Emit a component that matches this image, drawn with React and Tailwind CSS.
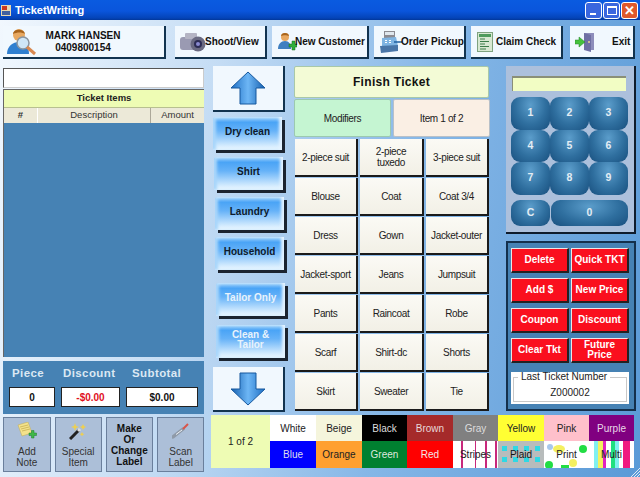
import React from "react";

const toolBtn =
  "flex items-center bg-[#f1f8fe] border-r-2 border-b-2 border-[#12334f] h-[33px] font-bold text-[10px] whitespace-nowrap text-[#111] shrink-0";

const PersonSearch = () => (
  <svg width="30" height="30" viewBox="0 0 30 30">
    <circle cx="13" cy="8" r="6" fill="#e8a860" />
    <path d="M7 7c0-5 11-6 12 0-3-2-8-2-12 0z" fill="#a8641c" />
    <path d="M1 27c0-8 6-12 12-12s10 4 10 12z" fill="#2f7fd0" />
    <circle cx="17" cy="16" r="6" fill="#cfe6f7" stroke="#8a95a0" strokeWidth="1.5" />
    <path d="M21 20l8 7" stroke="#d88850" strokeWidth="3" />
  </svg>
);

const Camera = () => (
  <svg width="26" height="20" viewBox="0 0 26 20">
    <rect x="0" y="5" width="22" height="13" rx="3" fill="#9a9ab2" />
    <rect x="5" y="1" width="12" height="6" rx="1" fill="#b4b4c4" />
    <circle cx="18" cy="12" r="7.5" fill="#6a6a82" />
    <circle cx="18" cy="12" r="4" fill="#2c2c55" />
    <circle cx="18" cy="12" r="2" fill="#8a8ad0" />
  </svg>
);

const PersonAdd = () => (
  <svg width="20" height="20" viewBox="0 0 20 20">
    <circle cx="8" cy="5" r="4" fill="#e8a860" />
    <path d="M4 4c0-4 8-4 8 0-2-1-6-1-8 0z" fill="#a8641c" />
    <path d="M1 17c0-5 3-8 7-8s6 3 6 8z" fill="#3f7fc0" />
    <path d="M12 12h3v-3h3v3h2v3h-2v3h-3v-3h-3z" fill="#2fae3a" stroke="#1a6d22" strokeWidth=".5" />
  </svg>
);

const Register = () => (
  <svg width="24" height="24" viewBox="0 0 24 24">
    <path d="M5 1h11v8H5z" fill="#8b8b92" />
    <path d="M6 2h9v3H6z" fill="#dfe7ee" />
    <path d="M3 8l14-1 2 9-16 2z" fill="#7fb4e2" />
    <path d="M6 10h2v1H6zM10 10h2v1h-2zM6 12h2v1H6zM10 12h2v1h-2z" fill="#fff" />
    <path d="M1 16l18-1v6L2 23z" fill="#4a76a8" />
    <path d="M15 12h8" stroke="#1f5f9f" strokeWidth="1.5" />
  </svg>
);

const ClaimDoc = () => (
  <svg width="16" height="20" viewBox="0 0 16 20">
    <rect x=".5" y=".5" width="15" height="19" fill="#d8e8d2" stroke="#7fa27f" />
    <rect x="2" y="2" width="12" height="3" fill="#4e9b5c" />
    <path d="M3 7h5M3 9.5h9M3 12h5M3 14.5h9M3 17h6" stroke="#3c7d4a" strokeWidth="1" />
  </svg>
);

const ExitDoor = () => (
  <svg width="20" height="20" viewBox="0 0 20 20">
    <path d="M9 1h10v17H9z" fill="#8d8dbb" />
    <path d="M9 1l7 2v17l-7-2z" fill="#6f6fa4" />
    <circle cx="14" cy="10" r="1" fill="#e8d090" />
    <path d="M0 8h4V5l6 5-6 5v-3H0z" fill="#45c23c" stroke="#25802a" strokeWidth=".5" />
  </svg>
);

const ArrowBig = ({ down }) => (
  <svg width="36" height="34" viewBox="0 0 36 34" className={down ? "rotate-180" : ""}>
    <defs>
      <linearGradient id={down ? "ad" : "au"} x1="0" x2="1" y1="0" y2="0">
        <stop offset="0" stopColor="#1f6fc4" />
        <stop offset=".5" stopColor="#6db6f5" />
        <stop offset="1" stopColor="#1560b0" />
      </linearGradient>
    </defs>
    <path d="M18 1L35 17H26V33H10V17H1z" fill={`url(#${down ? "ad" : "au"})`} stroke="#17589e" />
  </svg>
);

const NoteIcon = () => (
  <svg width="20" height="18" viewBox="0 0 20 18">
    <path d="M1 3l10-3 4 11-10 3z" fill="#f4e28c" stroke="#c0a850" strokeWidth=".5" />
    <path d="M3 5l8-2M4 7l8-2M5 9l8-2" stroke="#b8a040" strokeWidth=".6" />
    <path d="M12 11h2.5V8.500h2.500V11h2.500v2.500H17V16h-2.500v-2.500H12z" fill="#40b848" stroke="#1f7d2a" strokeWidth=".5" />
  </svg>
);

const WandIcon = () => (
  <svg width="18" height="18" viewBox="0 0 18 18">
    <path d="M1 17L10 8" stroke="#222" strokeWidth="3" />
    <path d="M9 9l2-2" stroke="#ddd" strokeWidth="3" />
    <path d="M6 1l1 3 3 1-3 1-1 3-1-3-3-1 3-1zM14 2l1 2 2 1-2 1-1 2-1-2-2-1 2-1zM13 10l.8 1.500 1.500.8-1.500.8-.8 1.400-.8-1.400-1.500-.8 1.500-.8z" fill="#eecf50" />
  </svg>
);

const ScanIcon = () => (
  <svg width="18" height="16" viewBox="0 0 18 16">
    <path d="M1 14L11 6" stroke="#8f9aa8" strokeWidth="3.500" strokeLinecap="round" />
    <path d="M4 11.500L10 7" stroke="#eef2f6" strokeWidth="1" />
    <path d="M11 6l5-5" stroke="#d8554a" strokeWidth="2" />
  </svg>
);

const Category = ({ label, light, offset, children }) => (
  <div
    className={`${offset} w-[69px] h-[33px] flex items-center justify-center text-center leading-[10px] pb-[4px] rounded-tl-[3px] shadow-[3px_3px_0_#1b2430,inset_-3px_0_3px_#e4f3ff,inset_3px_0_3px_#a8d6fb] bg-[linear-gradient(180deg,#a6d4fb_0%,#4aa4f6_16%,#66b2f8_42%,#cfe9fe_85%,#f0f9ff_100%)] font-bold text-[10px] ${light ? "text-[#e8f3fc]" : "text-[#0e1a2b]"}`}
  >
    {children || label}
  </div>
);

const garments = [
  "2-piece suit", "2-piece tuxedo", "3-piece suit",
  "Blouse", "Coat", "Coat 3/4",
  "Dress", "Gown", "Jacket-outer",
  "Jacket-sport", "Jeans", "Jumpsuit",
  "Pants", "Raincoat", "Robe",
  "Scarf", "Shirt-dc", "Shorts",
  "Skirt", "Sweater", "Tie",
];

const reds = ["Delete", "Quick TKT", "Add $", "New Price", "Coupon", "Discount", "Clear Tkt", "Future Price"];

const KEY =
  "flex items-center justify-center rounded-[9px] bg-[radial-gradient(ellipse_at_50%_25%,#5b9dcb_0%,#2f6f9f_55%,#184f7e_100%)] text-[#e4edf4] font-bold text-[10.5px]";

const Swatch = ({ bg, text, children, label }) => (
  <div className={`relative flex items-center justify-center overflow-hidden text-[10px] ${bg} ${text}`}>
    {children}
    <span className="relative">{label}</span>
  </div>
);

export default function App() {
  return (
    <div className="relative w-[640px] h-[477px] overflow-hidden flex flex-col [font-family:'Liberation_Sans',Arial,sans-serif] text-[10px] text-[#222] bg-[linear-gradient(100deg,#f2f8fe_0%,#c4dcf4_32%,#86b7e7_62%,#5a9ad7_100%)]">
      {/* title bar */}
      <div className="h-[20px] shrink-0 flex items-center justify-between bg-[linear-gradient(180deg,#0a5be0_0%,#0a55dc_55%,#0444b8_90%,#02379a_100%)]">
        <div className="flex items-center gap-[4px] pl-[1px]">
          <svg width="10" height="11" viewBox="0 0 10 11">
            <rect width="10" height="11" fill="#e8d8b0" />
            <rect x="1" y="1" width="5" height="4" fill="#c83820" />
            <rect x="1" y="6" width="8" height="4" fill="#4060a0" />
          </svg>
          <span className="text-white font-bold text-[11px]">TicketWriting</span>
        </div>
        <div className="flex gap-[1px] pr-[2px]">
          <div className="w-[17px] h-[17px] rounded-[3px] border border-white bg-[#3a66de] flex items-end pl-1 pb-[3px]">
            <div className="w-[6px] h-[2px] bg-white" />
          </div>
          <div className="w-[17px] h-[17px] rounded-[3px] border border-white bg-[#3a66de] flex items-center justify-center">
            <div className="w-[10px] h-[9px] border border-white border-t-2" />
          </div>
          <div className="w-[17px] h-[17px] rounded-[3px] border border-white bg-[#e0582c] text-white flex items-center justify-center text-[13px] font-bold leading-none">
            ✕
          </div>
        </div>
      </div>

      {/* toolbar */}
      <div className="flex pl-[3px] pt-[6px] shrink-0">
        <div className={`${toolBtn} w-[163px] pl-[3px]`}>
          <PersonSearch />
          <div className="ml-[8px] w-[78px] text-center leading-[12px]">
            <div>MARK HANSEN</div>
            <div>0409800154</div>
          </div>
        </div>
        <div className={`${toolBtn} w-[92px] ml-[9px] pl-[5px]`}>
          <Camera />
          <span className="-ml-[1px]">Shoot/View</span>
        </div>
        <div className={`${toolBtn} w-[97px] ml-[5px] pl-[5px]`}>
          <PersonAdd />
          <span className="-ml-[2px]">New Customer</span>
        </div>
        <div className={`${toolBtn} w-[92px] ml-[5px] pl-[5px]`}>
          <Register />
          <span className="-ml-[2px]">Order Pickup</span>
        </div>
        <div className={`${toolBtn} w-[92px] ml-[5px] pl-[6px]`}>
          <ClaimDoc />
          <span className="ml-[3px]">Claim Check</span>
        </div>
        <div className={`${toolBtn} w-[65px] ml-[7px] pl-[5px]`}>
          <ExitDoor />
          <span className="ml-[17px]">Exit</span>
        </div>
      </div>

      {/* main */}
      <div className="flex pt-[7px] pl-[3px]">
        {/* left column */}
        <div className="w-[201px] shrink-0 flex flex-col">
          <div className="h-[20px] bg-white border border-[#555] border-b-[#ccc] border-r-[#ccc] mt-[2px]" />
          <div className="mt-[1px] border-t border-l border-[#666]">
            <div className="h-[17px] bg-[#eefcb4] flex items-center justify-center font-bold text-[9.5px] text-[#222]">
              Ticket Items
            </div>
            <div className="h-[16px] flex bg-[#ece9d8] border-t border-[#b8c090] text-[9.5px] text-[#333]">
              <div className="w-[34px] flex items-center justify-center border-r border-[#fff] font-bold">#</div>
              <div className="w-[113px] flex items-center justify-center border-r border-[#aca899]">Description</div>
              <div className="flex-1 flex items-center justify-center">Amount</div>
            </div>
            <div className="h-[234px] bg-[#4682b4]" />
          </div>

          <div className="mt-[4px] h-[53px] bg-[#4682b4] flex flex-col font-bold">
            <div className="flex text-[#dbe8f3] text-[11.5px] tracking-[.4px] h-[26px] items-center">
              <span className="ml-[9px] w-[51px]">Piece</span>
              <span className="w-[69px]">Discount</span>
              <span>Subtotal</span>
            </div>
            <div className="flex text-[10px]">
              <div className="ml-[6px] w-[46px] h-[20px] bg-white border border-[#222] flex items-center justify-center text-[#111]">0</div>
              <div className="ml-[6px] w-[59px] h-[20px] bg-white border border-[#222] flex items-center justify-center text-[#e0101c]">-$0.00</div>
              <div className="ml-[6px] w-[72px] h-[20px] bg-white border border-[#222] flex items-center justify-center text-[#111]">$0.00</div>
            </div>
          </div>

          <div className="flex mt-[3px] gap-[4px] text-[10px] text-[#333] leading-[10.5px] text-center">
            <div className="w-[48px] h-[55px] bg-[#acbfd8] border border-[#6a7f9c] flex flex-col items-center pt-[4px]">
              <NoteIcon />
              <div className="mt-[7px]">Add<br />Note</div>
            </div>
            <div className="w-[47px] h-[55px] bg-[#acbfd8] border border-[#6a7f9c] flex flex-col items-center pt-[4px]">
              <WandIcon />
              <div className="mt-[7px]">Special<br />Item</div>
            </div>
            <div className="w-[48px] h-[55px] bg-[#acbfd8] border border-[#6a7f9c] flex items-center justify-center font-bold text-[#111] text-[10px] leading-[11px]">
              <div>Make<br />Or<br />Change<br />Label</div>
            </div>
            <div className="w-[47px] h-[55px] bg-[#acbfd8] border border-[#6a7f9c] flex flex-col items-center pt-[5px]">
              <ScanIcon />
              <div className="mt-[8px]">Scan<br />Label</div>
            </div>
          </div>
        </div>

        {/* right of left column */}
        <div className="ml-[7px] flex flex-col">
          <div className="flex">
            {/* category column */}
            <div className="w-[83px] shrink-0 flex flex-col pl-[2px]">
              <div className="w-[72px] h-[46px] bg-[#f1f8fe] border-r-2 border-b-2 border-[#12334f] flex items-center justify-center">
                <ArrowBig />
              </div>
              <div className="mt-[5px]"><Category label="Dry clean" offset="" /></div>
              <div className="mt-[7px]"><Category label="Shirt" offset="ml-[1px]" /></div>
              <div className="mt-[7px]"><Category label="Laundry" offset="ml-[2px]" /></div>
              <div className="mt-[7px]"><Category label="Household" offset="ml-[2px]" /></div>
              <div className="mt-[13px]"><Category label="Tailor Only" light offset="ml-[3px]" /></div>
              <div className="mt-[9px]"><Category light offset="ml-[3px]"><span>Clean &<br />Tailor</span></Category></div>
              <div className="mt-[9px] w-[72px] h-[45px] bg-[#f1f8fe] border-r-2 border-b-2 border-[#12334f] flex items-center justify-center">
                <ArrowBig down />
              </div>
            </div>

            {/* garments */}
            <div className="w-[198px] shrink-0 flex flex-col">
              <div className="w-[195px] h-[32px] bg-[#f3fbd6] border border-[#a9c8a8] rounded-[2px] flex items-center justify-center font-bold text-[12px] tracking-[.3px] text-[#111]">
                Finish Ticket
              </div>
              <div className="flex gap-[2px] mt-[1px] text-[10px] tracking-[-.35px]">
                <div className="w-[97px] h-[38px] bg-[#c5f5d2] border border-[#9cc9b0] rounded-[2px] flex items-center justify-center">Modifiers</div>
                <div className="w-[97px] h-[38px] bg-[#faefe4] border border-[#b8c0c8] rounded-[2px] flex items-center justify-center">Item 1 of 2</div>
              </div>
              <div className="grid grid-cols-[65px_66px_65px] auto-rows-[39px] mt-[2px] ml-[1px] text-[10px] tracking-[-.35px]">
                {garments.map((g) => (
                  <div
                    key={g}
                    className={`flex items-center justify-center text-center leading-[11px] mr-[2px] mb-[1px] border-r-2 border-b-2 border-[#1a1a1a] bg-[linear-gradient(180deg,#fbfaf5_0%,#f2f0e6_100%)] text-[#222] ${g === "2-piece tuxedo" ? "px-2" : "whitespace-nowrap"}`}
                  >
                    {g}
                  </div>
                ))}
              </div>
            </div>

            {/* right panels */}
            <div className="w-[130px] ml-[14px] shrink-0 flex flex-col">
              <div className="h-[168px] bg-[#acc0dc] border-r-2 border-b-2 border-[#0f1c2c] pl-[6px] pt-[10px]">
                <div className="w-[114px] h-[15px] bg-[#f2fdc4] border-t-2 border-l border-[#8a8f78]" />
                <div className="grid grid-cols-[39px_39px_39px] auto-rows-[32.5px] mt-[6px] ml-[-1px]">
                  {["1", "2", "3", "4", "5", "6", "7", "8", "9"].map((k) => (
                    <div key={k} className={KEY}>{k}</div>
                  ))}
                </div>
                <div className="flex gap-[1px] mt-[5px] ml-[-1px]">
                  <div className={`${KEY} w-[39px] h-[26px]`}>C</div>
                  <div className={`${KEY} w-[77px] h-[26px]`}>0</div>
                </div>
              </div>

              <div className="mt-[7px] h-[170px] bg-[#4682b4] border-2 border-[#14304c] pt-[5px] pl-[3px]">
                <div className="grid grid-cols-[58px_58px] auto-rows-[25px] gap-x-[2px] gap-y-[5px]">
                  {reds.map((r) => (
                    <div
                      key={r}
                      className="flex items-center justify-center text-center bg-[#fa0f1e] border-t border-l border-[#e8e8e8] border-r-2 border-b-2 border-r-[#222] border-b-[#222] text-white font-bold text-[10px] leading-[10px]"
                    >
                      {r === "Future Price" ? <span>Future<br />Price</span> : r}
                    </div>
                  ))}
                </div>
                <div className="mt-[9px] w-[118px] h-[32px] bg-white p-[2px] pt-[5px] relative text-[#222]">
                  <div className="h-full border border-[#c8c8c8] flex items-end justify-center pb-[1px]">Z000002</div>
                  <span className="absolute top-0 left-[7px] bg-white px-[3px] leading-[10px]">Last Ticket Number</span>
                </div>
              </div>
            </div>
          </div>

          {/* colours */}
          <div className="flex mt-[3px]">
            <div className="w-[59px] h-[53px] bg-[#eefcb4] flex items-center justify-center text-[#222]">1 of 2</div>
            <div className="grid grid-cols-[46px_46px_45px_46px_45px_46px_45px_45px] grid-rows-[26px_27px]">
              <Swatch bg="bg-white" text="text-[#222]" label="White" />
              <Swatch bg="bg-[#f5f5dc]" text="text-[#222]" label="Beige" />
              <Swatch bg="bg-black" text="text-[#ddd]" label="Black" />
              <Swatch bg="bg-[#a52a2a]" text="text-[#e8d8d8]" label="Brown" />
              <Swatch bg="bg-[#808080]" text="text-[#ddd]" label="Gray" />
              <Swatch bg="bg-[#ffff33]" text="text-[#222]" label="Yellow" />
              <Swatch bg="bg-[#ffc0cb]" text="text-[#222]" label="Pink" />
              <Swatch bg="bg-[#800080]" text="text-[#e8d8e8]" label="Purple" />
              <Swatch bg="bg-[#0000ff]" text="text-[#dde]" label="Blue" />
              <Swatch bg="bg-[#ffa030]" text="text-[#222]" label="Orange" />
              <Swatch bg="bg-[#008030]" text="text-[#dde8dd]" label="Green" />
              <Swatch bg="bg-[#ff0000]" text="text-[#f4e8e8]" label="Red" />
              <Swatch
                bg="bg-[linear-gradient(90deg,#fff_18%,#c8287c_18%,#c8287c_22%,#fff_22%,#fff_48%,#c8287c_48%,#c8287c_52%,#fff_52%,#fff_72%,#c8287c_72%,#c8287c_76%,#fff_76%,#fff_93%,#c8287c_93%,#c8287c_97%,#fff_97%)]"
                text="text-[#222]"
                label="Stripes"
              />
              <Swatch bg="bg-[#b8bcbc]" text="text-[#111]" label="Plaid">
                <svg className="absolute inset-0" width="46" height="27" viewBox="0 0 46 27">
                  <path
                    d="M4 5h5v5H4zM15 5h5v5h-5zM26 5h5v5h-5zM37 5h5v5h-5zM4 16h5v5H4zM15 16h5v5h-5zM26 16h5v5h-5zM37 16h5v5h-5z"
                    fill="#2fd8e4"
                  />
                </svg>
              </Swatch>
              <Swatch bg="bg-white" text="text-[#222]" label="Print">
                <svg className="absolute inset-0" width="45" height="27" viewBox="0 0 45 27">
                  <circle cx="6" cy="6" r="3" fill="#a8c8ec" />
                  <ellipse cx="15" cy="8" rx="6" ry="4" fill="#f4f060" />
                  <circle cx="39" cy="8" r="4" fill="#22dd44" />
                  <circle cx="5" cy="24" r="4" fill="#22dd44" />
                  <rect x="17" y="24" width="8" height="3" fill="#22dd44" />
                  <ellipse cx="29" cy="22" rx="4" ry="4" fill="#f4f060" />
                </svg>
              </Swatch>
              <Swatch
                bg="bg-[linear-gradient(90deg,#fff_10%,#80f0f0_10%,#80f0f0_20%,#f4f060_20%,#f4f060_30%,#e020c0_30%,#e020c0_38%,#fff_38%,#fff_48%,#20e080_48%,#20e080_58%,#80f0f0_58%,#80f0f0_66%,#fff_66%,#fff_76%,#f01880_76%,#f01880_92%,#fff_92%)]"
                text="text-[#222]"
                label="Multi"
              />
            </div>
          </div>
        </div>
      </div>

      {/* resize grip */}
      <svg className="absolute right-0 bottom-0" width="10" height="10" viewBox="0 0 10 10">
        <path d="M10 1L1 10M10 4L4 10M10 7L7 10" stroke="#dfeaf5" strokeWidth="1" />
      </svg>
    </div>
  );
}
